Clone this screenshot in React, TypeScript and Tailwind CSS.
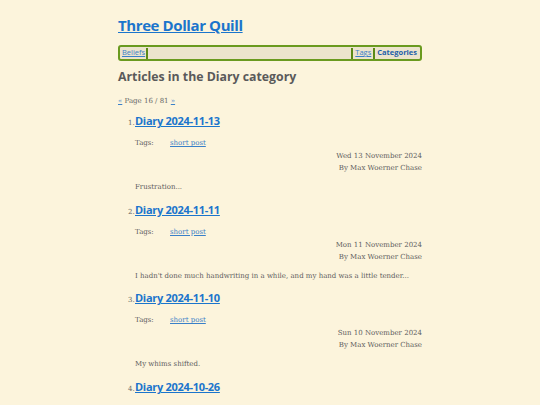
import React from "react";

const posts = [
  { title: "Diary 2024-11-13", date: "Wed 13 November 2024", summary: "Frustration..." },
  { title: "Diary 2024-11-11", date: "Mon 11 November 2024", summary: "I hadn't done much handwriting in a while, and my hand was a little tender..." },
  { title: "Diary 2024-11-10", date: "Sun 10 November 2024", summary: "My whims shifted." },
  { title: "Diary 2024-10-26", date: "Sat 26 October 2024", summary: "..." },
];

const heading = { fontFamily: "'Open Sans', 'Noto Sans', sans-serif" };
const body = { fontFamily: "'DejaVu Serif', 'Liberation Serif', serif" };

export default function App() {
  return (
    <div className="h-[405px] overflow-hidden bg-[#fcf4dc] text-[#5c5c5c]" style={body}>
      <div className="mx-auto w-[304px] pt-[14px]">
        <h1 style={heading} className="text-[15px] font-bold leading-[22px] tracking-[-0.4px]">
          <a href="#" className="text-[#1b75cc] underline">Three Dollar Quill</a>
        </h1>

        {/* nav */}
        <nav style={heading} className="mt-[9px] flex h-[16px] items-center rounded-[3px] border-2 border-[#6a9a1f] bg-[#ece4cd] px-[2px] text-[7.5px] leading-none">
          <a href="#" className="text-[#3a80c8] underline">Beliefs</a>
          <span className="mx-[1px] h-[11px] w-[2px] bg-[#5b8a16]" />
          <span className="flex-1" />
          <span className="mx-[1px] h-[11px] w-[2px] bg-[#5b8a16]" />
          <a href="#" className="px-[1px] text-[#3a80c8] underline">Tags</a>
          <span className="mx-[1px] h-[11px] w-[2px] bg-[#5b8a16]" />
          <a href="#" className="px-[1px] font-bold text-[#1f5fa8]">Categories</a>
        </nav>

        <h2 style={heading} className="mt-[7px] text-[12.3px] font-bold leading-[18px] text-[#5a5a5a]">
          Articles in the Diary category
        </h2>

        <p className="mt-[10px] text-[7px] leading-[10px] text-[#666]">
          <a href="#" className="text-[#3a80c8] underline">«</a> Page 16 / 81 <a href="#" className="text-[#3a80c8] underline">»</a>
        </p>

        <ol className="mt-[7px] pl-[17px]">
          {posts.map((p, i) => (
            <li key={p.title} className="h-[88.7px]">
              <div className="flex items-baseline">
                <span className="-ml-[7px] w-[7px] text-[7px] text-[#666]">{i + 1}.</span>
                <a href="#" style={heading} className="text-[11px] font-bold leading-[16px] tracking-[-0.3px] text-[#1b75cc] underline">
                  {p.title}
                </a>
              </div>
              <div className="mt-[9px] flex text-[7px] leading-[10px]">
                <span className="w-[35px]">Tags:</span>
                <a href="#" className="text-[#3a80c8] underline">short post</a>
              </div>
              <div className="mt-[2px] text-right text-[7px] leading-[12px]">
                <div>{p.date}</div>
                <div>By Max Woerner Chase</div>
              </div>
              <p className="mt-[8px] text-[7px] leading-[10px]">{p.summary}</p>
            </li>
          ))}
        </ol>
      </div>
    </div>
  );
}
